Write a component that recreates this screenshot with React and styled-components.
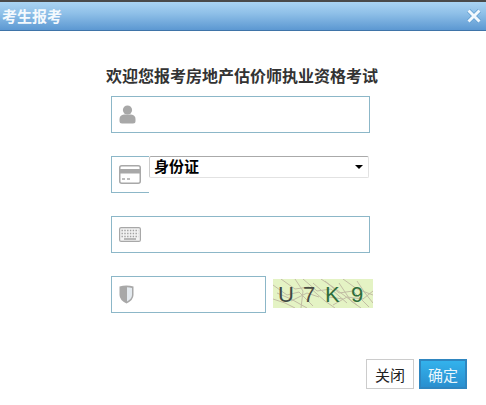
import React from 'react';
import styled, { createGlobalStyle } from 'styled-components';

const GlobalStyle = createGlobalStyle`
  html, body {
    margin: 0;
    padding: 0;
    background: #fff;
    font-family: "Liberation Sans", "Noto Sans CJK SC", sans-serif;
  }
`;

const Dialog = styled.div`
  width: 486px;
  height: 405px;
  overflow: hidden;
  display: flex;
  flex-direction: column;
  background: #fff;
`;

const TitleBar = styled.div`
  height: 28px;
  flex: none;
  display: flex;
  align-items: center;
  justify-content: space-between;
  padding: 0 4px 0 2px;
  border-top: 2px solid #4a4a4a;
  border-bottom: 1px solid #3f74a8;
  background: linear-gradient(to bottom, #aad4f3 0%, #8fc0e8 40%, #5c98d2 100%);
`;

const TitleText = styled.span`
  font-family: "Noto Sans CJK SC", sans-serif;
  font-size: 15px;
  font-weight: 700;
  line-height: 28px;
  color: #f4f9fd;
`;

const CloseIcon = styled.svg`
  width: 16px;
  height: 16px;
  display: block;
`;

const Heading = styled.h1`
  margin: 33px 0 0;
  height: 23px;
  padding-left: 106px;
  font-family: "Noto Sans CJK SC", sans-serif;
  font-size: 16px;
  font-weight: 700;
  line-height: 23px;
  color: #333;
`;

const Form = styled.div`
  display: flex;
  flex-direction: column;
  gap: 23px;
  margin-top: 9px;
  padding-left: 111px;
`;

const Row = styled.div`
  display: flex;
  height: 37px;
`;

const Field = styled.div`
  box-sizing: border-box;
  width: ${({ $width }) => $width}px;
  height: 37px;
  display: flex;
  align-items: center;
  padding-left: 7px;
  border: 1px solid #8cb7c8;
`;

const IconBox = styled.div`
  box-sizing: border-box;
  width: 38px;
  height: 37px;
  flex: none;
  display: flex;
  align-items: center;
  padding-left: 7px;
  border: 1px solid #8cb7c8;
  border-right: 0;
`;

const Icon = styled.svg`
  display: block;
  flex: none;
`;

const SelectBox = styled.div`
  box-sizing: border-box;
  width: 220px;
  height: 22px;
  display: flex;
  align-items: center;
  justify-content: space-between;
  padding: 0 5px 2px 4px;
  border: 1px solid #e2e2e2;
  border-top-color: #aaa;
  border-left-color: #ccc;
  border-radius: 2px;
  font-family: "Noto Sans CJK SC", sans-serif;
  font-size: 15px;
  font-weight: 700;
  line-height: 18px;
  color: #000;
`;

const Caret = styled.span`
  width: 0;
  height: 0;
  margin-top: 2px;
  border-left: 4px solid transparent;
  border-right: 4px solid transparent;
  border-top: 4px solid #000;
`;

const Captcha = styled.svg`
  display: block;
  flex: none;
  width: 100px;
  height: 29px;
  margin: 3px 0 0 7px;
`;

const CaptchaChar = styled.text`
  font-family: "Liberation Sans", sans-serif;
  font-size: 22px;
  fill: ${({ $color }) => $color};
`;

const Footer = styled.div`
  display: flex;
  justify-content: flex-end;
  gap: 5px;
  margin-top: 46px;
  padding-right: 19px;
`;

const Button = styled.button`
  box-sizing: border-box;
  width: 48px;
  height: 30px;
  padding: 0;
  font-family: "Noto Sans CJK SC", sans-serif;
  font-size: 15px;
  font-weight: 400;
  color: ${({ $primary }) => ($primary ? '#e8f6fd' : '#222')};
  border: ${({ $primary }) => ($primary ? '2px solid #2f86c0' : '1px solid #ccc')};
  background: ${({ $primary }) =>
    $primary ? 'linear-gradient(to bottom, #33b2ec, #2a8fcf)' : '#fff'};
`;

const noise = [
  'M0 6 L14 16 L26 13 L40 27', 'M8 0 L22 10 L36 8 L52 22 L62 29', 'M30 0 L44 12 L58 10 L74 24',
  'M52 2 L66 14 L80 12 L96 28', 'M70 0 L84 10 L100 16', 'M0 20 L12 24 L22 29', 'M18 22 L34 14 L46 18',
  'M60 26 L74 18 L90 20 L100 12', 'M40 4 L56 18 L70 20', 'M84 2 L92 14 L100 24',
  'M22 0 L30 12 L28 29', 'M48 0 L60 8 L84 26', 'M66 4 L78 22 L88 29', 'M4 14 L18 20 L34 29',
];

const App = () => (
  <>
    <GlobalStyle />
    <Dialog>
      <TitleBar>
        <TitleText>考生报考</TitleText>
        <CloseIcon viewBox="0 0 16 16">
          <path d="M2.5 2.5 L13.5 13.5 M13.5 2.5 L2.5 13.5" stroke="#5f9ccf" strokeWidth="4.4" />
          <path d="M2.5 2.5 L13.5 13.5 M13.5 2.5 L2.5 13.5" stroke="#f2f8fd" strokeWidth="3" />
        </CloseIcon>
      </TitleBar>
      <Heading>欢迎您报考房地产估价师执业资格考试</Heading>
      <Form>
        <Row>
          <Field $width={259}>
            <Icon width="17" height="19" viewBox="0 0 17 19">
              <circle cx="8.5" cy="5" r="4.6" fill="#a8a8a8" />
              <path d="M0.5 14 Q0.5 10 5 9.5 L12 9.5 Q16.5 10 16.5 14 L16.5 16 Q16.5 18.5 14 18.5 L3 18.5 Q0.5 18.5 0.5 16 Z" fill="#a8a8a8" />
            </Icon>
          </Field>
        </Row>
        <Row>
          <IconBox>
            <Icon width="22" height="19" viewBox="0 0 22 19">
              <rect x="0.75" y="0.75" width="20.5" height="17.5" rx="2" fill="#fff" stroke="#a8a8a8" strokeWidth="1.5" />
              <rect x="1" y="4" width="20" height="4.5" fill="#a8a8a8" />
              <path d="M3 14 H6 M8 14 H11" stroke="#a8a8a8" strokeWidth="1.4" />
            </Icon>
          </IconBox>
          <SelectBox>
            <span>身份证</span>
            <Caret />
          </SelectBox>
        </Row>
        <Row>
          <Field $width={259}>
            <Icon width="22" height="15" viewBox="0 0 22 15">
              <rect x="0.6" y="0.6" width="20.8" height="13.8" rx="1.5" fill="#f2f2f2" stroke="#a8a8a8" strokeWidth="1.2" />
              <path d="M2.5 3.5 H19.5 M2.5 6.5 H19.5" stroke="#a0a0a0" strokeWidth="1.3" strokeDasharray="1.4 1.4" />
              <path d="M2.5 9.5 H19.5" stroke="#a0a0a0" strokeWidth="1.3" strokeDasharray="1.4 1.4" />
              <path d="M5 12 H17" stroke="#a0a0a0" strokeWidth="1.4" />
            </Icon>
          </Field>
        </Row>
        <Row>
          <Field $width={155}>
            <Icon width="15" height="19" viewBox="0 0 15 19">
              <path d="M0.5 1.5 Q4 0.5 7.5 0.5 Q11 0.5 14.5 1.5 L14.5 10 Q14.5 15 7.5 18.5 Q0.5 15 0.5 10 Z" fill="#a8a8a8" />
              <path d="M8 2.2 Q10.5 2.2 13 3 L13 10 Q13 13.5 8 16.5 Z" fill="#e4eaef" />
            </Icon>
          </Field>
          <Captcha viewBox="0 0 100 29">
            <rect width="100" height="29" fill="#e4f3c4" />
            {noise.map((d) => (
              <path key={d} d={d} fill="none" stroke="#c2bda4" strokeWidth="1" />
            ))}
            <CaptchaChar x="5" y="23" $color="#3f4a44">U</CaptchaChar>
            <CaptchaChar x="30" y="23" $color="#4a4d42">7</CaptchaChar>
            <CaptchaChar x="52" y="23" $color="#2f6e3c">K</CaptchaChar>
            <CaptchaChar x="78" y="23" $color="#2f6e3c">9</CaptchaChar>
          </Captcha>
        </Row>
      </Form>
      <Footer>
        <Button>关闭</Button>
        <Button $primary>确定</Button>
      </Footer>
    </Dialog>
  </>
);

export default App;
